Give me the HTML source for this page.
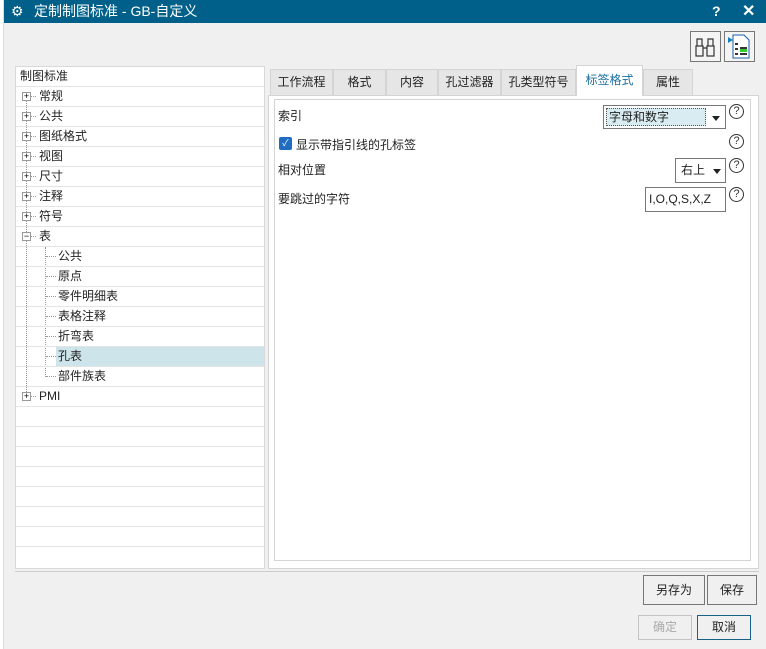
<!DOCTYPE html>
<html><head><meta charset="utf-8"><style>
*{box-sizing:border-box;margin:0;padding:0}
body{width:766px;height:649px;background:#f0f0f0;font-family:"Liberation Sans","Noto Sans CJK SC",sans-serif;font-size:12px;color:#222;position:relative;overflow:hidden}
.a{position:absolute}
#strip{left:0;top:0;width:4px;height:649px;background:#fff;border-right:1px solid #ddd}
#title{left:4px;top:0;width:762px;height:23px;background:#00608a;color:#fff;font-size:14px;line-height:23px}
.row{position:absolute;left:16px;width:248px;height:20px;border-bottom:1px solid #e4e4e4;line-height:19px;font-size:12px}
.pm{position:absolute;width:9px;height:9px;border:1px solid #999;background:#fff;font-size:9px;line-height:7px;text-align:center;color:#000}
.tab{position:absolute;top:69px;height:26px;background:#e6e6e6;border:1px solid #d4d4d4;border-bottom:none;text-align:center;line-height:25px;font-size:12px}
.btn{position:absolute;border:1px solid #777;background:#f0f0f0;text-align:center;font-size:12px}
.q{position:absolute;width:15px;height:15px;border:1px solid #333;border-radius:50%;font-size:11px;line-height:13px;text-align:center;color:#333}
</style></head><body>
<div class="a" id="strip"></div>
<div class="a" id="title"><span style="position:absolute;left:7px;font-size:14px">⚙</span><span style="position:absolute;left:30px">定制制图标准 - GB-自定义</span><span style="position:absolute;left:708px;font-weight:bold">?</span><span style="position:absolute;left:738px;font-size:16px;font-weight:bold">✕</span></div>
<!-- top icons -->
<div class="a" style="left:690px;top:31px;width:31px;height:31px;border:1px solid #777;background:#f4f4f4">
<svg width="29" height="29"><g fill="none" stroke="#333" stroke-width="1.2"><rect x="5" y="14" width="7" height="10"/><rect x="16" y="14" width="7" height="10"/><path d="M6 14V7h5v7M17 14V7h5v7M12 16h4"/></g></svg></div>
<div class="a" style="left:724px;top:31px;width:31px;height:31px;border:1px solid #777;background:#f4f4f4">
<svg width="29" height="29"><path d="M8 3h11l5 5v18H8z" fill="#fff" stroke="#1a5ea8"/><path d="M3 5l5 3-5 3z" fill="#1a7fc0"/><g fill="#333"><rect x="10" y="11" width="3" height="2"/><rect x="10" y="16" width="3" height="2"/><rect x="10" y="21" width="3" height="2"/><rect x="15" y="15" width="7" height="2"/><rect x="15" y="21" width="7" height="2"/></g><rect x="15" y="17" width="7" height="3" fill="#3c3"/></svg></div>
<!-- tree -->
<div class="a" style="left:15px;top:66px;width:250px;height:503px;background:#fff;border:1px solid #d9d9d9"></div>
<div class="row" style="top:67px;padding-left:4px">制图标准</div>
<div class="a" style="left:26px;top:97px;height:303px;border-left:1px dotted #999"></div>
<div class="a" style="left:45px;top:247px;height:130px;border-left:1px dotted #999"></div>
<div id="tree"></div>
<div class="row" style="top:407px"></div><div class="row" style="top:427px"></div><div class="row" style="top:447px"></div><div class="row" style="top:467px"></div><div class="row" style="top:487px"></div><div class="row" style="top:507px"></div><div class="row" style="top:527px"></div>
<script>
var t=[["常规",0],["公共",0],["图纸格式",0],["视图",0],["尺寸",0],["注释",0],["符号",0],["表",2],["公共",1],["原点",1],["零件明细表",1],["表格注释",1],["折弯表",1],["孔表",1],["部件族表",1],["PMI",0]];
var h="";t.forEach(function(e,i){var y=87+i*20;if(e[1]==1){h+='<div class="row" style="top:'+y+'px"><div style="position:absolute;left:30px;top:9px;width:10px;border-top:1px dotted #999"></div><div style="position:absolute;left:40px;top:0;right:0;height:19px;'+(e[0]=="孔表"?'background:#cde5ea;':'')+'padding-left:2px">'+e[0]+'</div></div>';}else{h+='<div class="row" style="top:'+y+'px"><div class="pm" style="left:6px;top:5px">'+(e[1]==2?'−':'+')+'</div><div style="position:absolute;left:15px;top:9px;width:5px;border-top:1px dotted #999"></div><span style="position:absolute;left:23px">'+e[0]+'</span></div>';}});
document.getElementById('tree').innerHTML=h;
</script>
<!-- tabs -->
<div class="a" style="left:268px;top:95px;width:491px;height:474px;background:#fff;border:1px solid #d4d4d4"></div>
<div class="a" style="left:274px;top:99px;width:477px;height:462px;border:1px solid #d4d4d4"></div>
<div class="tab" style="left:270px;width:63px">工作流程</div>
<div class="tab" style="left:333px;width:53px">格式</div>
<div class="tab" style="left:386px;width:52px">内容</div>
<div class="tab" style="left:438px;width:63px">孔过滤器</div>
<div class="tab" style="left:501px;width:75px">孔类型符号</div>
<div class="tab" style="left:576px;top:65px;height:31px;width:67px;background:#fff;color:#1a6fa0;line-height:28px">标签格式</div>
<div class="tab" style="left:643px;width:50px">属性</div>
<!-- content -->
<div class="a" style="left:278px;top:107px">索引</div>
<div class="a" style="left:603px;top:105px;width:123px;height:24px;border:1px solid #777;background:#fff"><div style="position:absolute;left:2px;top:2px;width:100px;height:18px;background:#d9ecf2;border:1px dotted #555;line-height:16px;padding-left:2px;font-size:12px">字母和数字</div><div style="position:absolute;left:108px;top:10px;border:4px solid transparent;border-top:5px solid #222"></div></div>
<div class="q" style="left:729px;top:104px">?</div>
<div class="a" style="left:279px;top:137px;width:13px;height:13px;background:#1f6cc0;border-radius:2px;color:#fff;font-size:9px;line-height:13px;text-align:center">✓</div>
<div class="a" style="left:296px;top:136px">显示带指引线的孔标签</div>
<div class="q" style="left:729px;top:134px">?</div>
<div class="a" style="left:278px;top:161px">相对位置</div>
<div class="a" style="left:675px;top:158px;width:51px;height:25px;border:1px solid #777;background:#fff;line-height:23px;padding-left:5px">右上<div style="position:absolute;left:37px;top:10px;border:4px solid transparent;border-top:5px solid #222"></div></div>
<div class="q" style="left:729px;top:158px">?</div>
<div class="a" style="left:278px;top:190px">要跳过的字符</div>
<div class="a" style="left:645px;top:187px;width:81px;height:25px;border:1px solid #777;background:#fff;line-height:23px;padding-left:3px">I,O,Q,S,X,Z</div>
<div class="q" style="left:729px;top:187px">?</div>
<!-- bottom -->
<div class="a" style="left:15px;top:571px;width:744px;border-top:1px solid #ccc"></div>
<div class="btn" style="left:643px;top:575px;width:62px;height:30px;line-height:28px">另存为</div>
<div class="btn" style="left:707px;top:575px;width:50px;height:30px;line-height:28px">保存</div>
<div class="btn" style="left:638px;top:615px;width:54px;height:25px;line-height:23px;border-color:#c4c4c4;color:#aaa">确定</div>
<div class="btn" style="left:697px;top:615px;width:54px;height:25px;line-height:23px;border-color:#1a5f86">取消</div>
</body></html>
